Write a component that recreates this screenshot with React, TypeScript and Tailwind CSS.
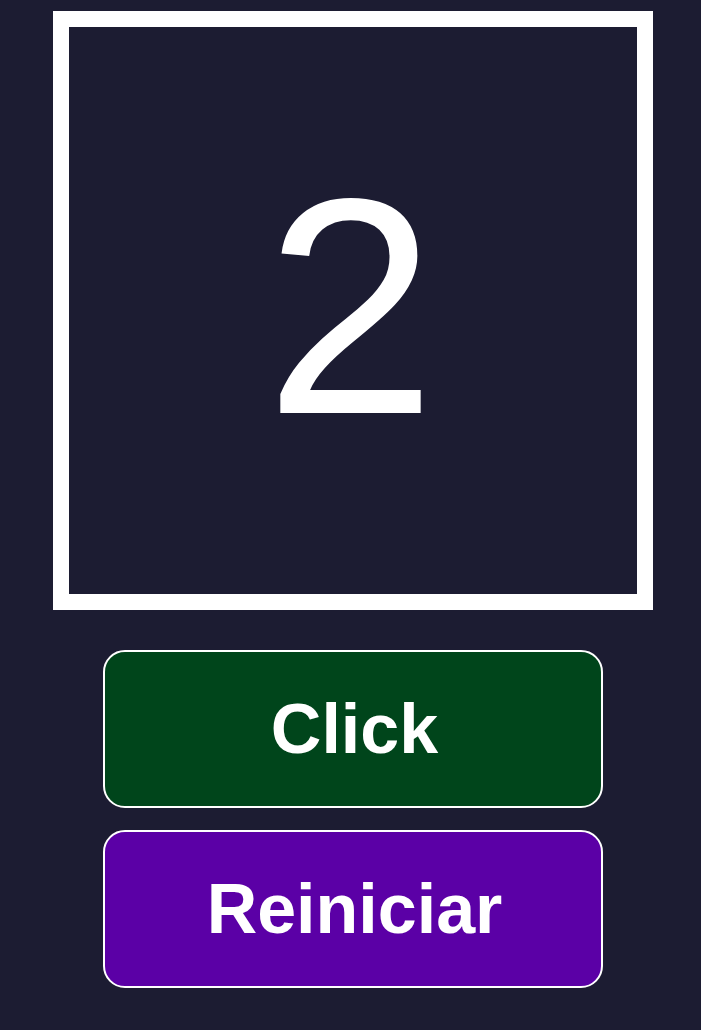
export default function App() {
  return (
    <div
      className="min-h-[1030px] w-full bg-[#1c1c32] flex flex-col items-center pt-[11px] pl-[4px]"
      style={{ fontFamily: '"Liberation Sans", Arial, sans-serif' }}
    >
      <div className="w-[600px] h-[599px] border-[16px] border-white bg-[#1c1c32] flex items-center justify-center">
        <span className="text-white text-[308px] leading-none -mt-[10px] -ml-[4px]">2</span>
      </div>
      <button className="mt-[40px] w-[500px] h-[158px] rounded-[22px] border-2 border-white bg-[#00451b] text-white font-bold text-[70px] leading-none flex items-center justify-center pl-[4px]">
        Click
      </button>
      <button className="mt-[22px] w-[500px] h-[158px] rounded-[22px] border-2 border-white bg-[#5b00a6] text-white font-bold text-[70px] leading-none flex items-center justify-center pl-[4px]">
        Reiniciar
      </button>
    </div>
  );
}
